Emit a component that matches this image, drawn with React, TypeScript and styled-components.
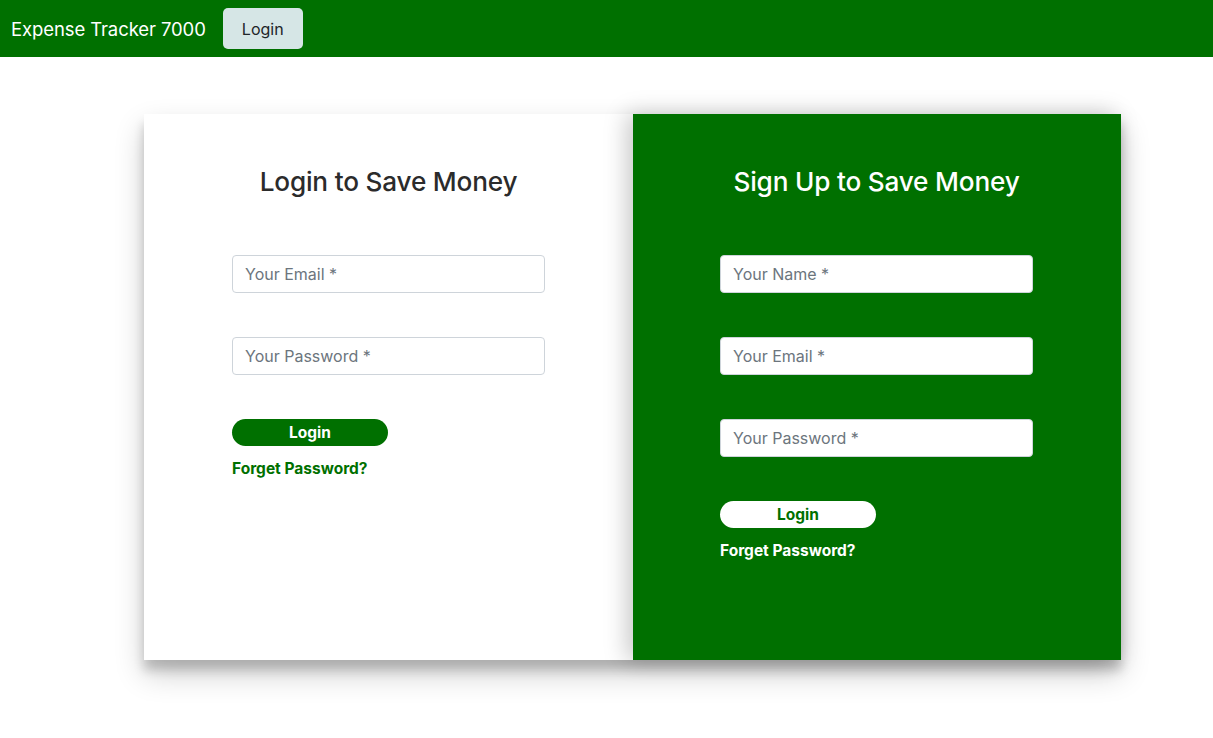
import React from "react";
import styled, { createGlobalStyle } from "styled-components";

const GREEN = "#007000";

const GlobalStyle = createGlobalStyle`
  body {
    margin: 0;
    background: #fff;
    font-family: Inter, "Helvetica Neue", Arial, sans-serif;
  }
  * {
    box-sizing: border-box;
  }
`;

const Nav = styled.nav`
  height: 57px;
  background: ${GREEN};
  display: flex;
  align-items: center;
  padding: 0 11px;
  gap: 17px;
`;

const Brand = styled.div`
  color: #fff;
  font-size: 18.5px;
  letter-spacing: -0.1px;
`;

const NavButton = styled.button`
  height: 41px;
  width: 80px;
  border: none;
  border-radius: 5px;
  background: #d6e6e6;
  color: #212529;
  font-family: inherit;
  font-size: 16px;
`;

const Page = styled.main`
  display: flex;
  padding: 57px 0 78px 144px;
`;

const Card = styled.div`
  width: 977px;
  height: 546px;
  display: flex;
  background: #fff;
  box-shadow: 0 14px 28px rgba(0, 0, 0, 0.2), 0 10px 10px rgba(0, 0, 0, 0.18);
`;

const Panel = styled.section<{ $dark?: boolean }>`
  flex: 0 0 ${(p) => (p.$dark ? "488px" : "489px")};
  display: flex;
  flex-direction: column;
  padding: 52px 88px 0 ${(p) => (p.$dark ? "87px" : "88px")};
  background: ${(p) => (p.$dark ? GREEN : "#fff")};
  color: ${(p) => (p.$dark ? "#fff" : "#2b2b2b")};
  box-shadow: ${(p) =>
    p.$dark ? "-6px 0 22px rgba(0, 0, 0, 0.22)" : "none"};
  position: relative;
`;

const Heading = styled.h2`
  margin: 0 0 57px;
  text-align: center;
  font-size: 26.2px;
  font-weight: 500;
  line-height: 32px;
  letter-spacing: -0.2px;
`;

const Form = styled.form`
  display: flex;
  flex-direction: column;
  gap: 44px;
`;

const Input = styled.input`
  height: 38px;
  width: 313px;
  border: 1px solid #ced4da;
  border-radius: 4px;
  padding: 0 12px;
  font-family: inherit;
  font-size: 16px;
  color: #212529;
  background: #fff;
  outline: none;
  &::placeholder {
    color: #6c757d;
  }
`;

const Actions = styled.div`
  display: flex;
  flex-direction: column;
  gap: 12px;
`;

const PillButton = styled.button<{ $dark?: boolean }>`
  width: 156px;
  height: 27px;
  border: none;
  border-radius: 14px;
  background: ${(p) => (p.$dark ? "#fff" : GREEN)};
  color: ${(p) => (p.$dark ? GREEN : "#fff")};
  font-family: inherit;
  font-weight: 700;
  font-size: 15.5px;
  padding: 0;
`;

const ForgetLink = styled.a<{ $dark?: boolean }>`
  color: ${(p) => (p.$dark ? "#fff" : GREEN)};
  font-weight: 700;
  font-size: 15.5px;
  line-height: 22px;
  text-decoration: none;
`;

type FormPanelProps = {
  title: string;
  fields: string[];
  dark?: boolean;
};

const FormPanel: React.FC<FormPanelProps> = ({ title, fields, dark }) => (
  <Panel $dark={dark}>
    <Heading>{title}</Heading>
    <Form onSubmit={(e) => e.preventDefault()}>
      {fields.map((f) => (
        <Input key={f} placeholder={`${f} *`} />
      ))}
      <Actions>
        <PillButton $dark={dark} type="submit">
          Login
        </PillButton>
        <ForgetLink $dark={dark} href="#">
          Forget Password?
        </ForgetLink>
      </Actions>
    </Form>
  </Panel>
);

export default function App() {
  return (
    <>
      <GlobalStyle />
      <Nav>
        <Brand>Expense Tracker 7000</Brand>
        <NavButton>Login</NavButton>
      </Nav>
      <Page>
        <Card>
          <FormPanel
            title="Login to Save Money"
            fields={["Your Email", "Your Password"]}
          />
          <FormPanel
            dark
            title="Sign Up to Save Money"
            fields={["Your Name", "Your Email", "Your Password"]}
          />
        </Card>
      </Page>
    </>
  );
}
